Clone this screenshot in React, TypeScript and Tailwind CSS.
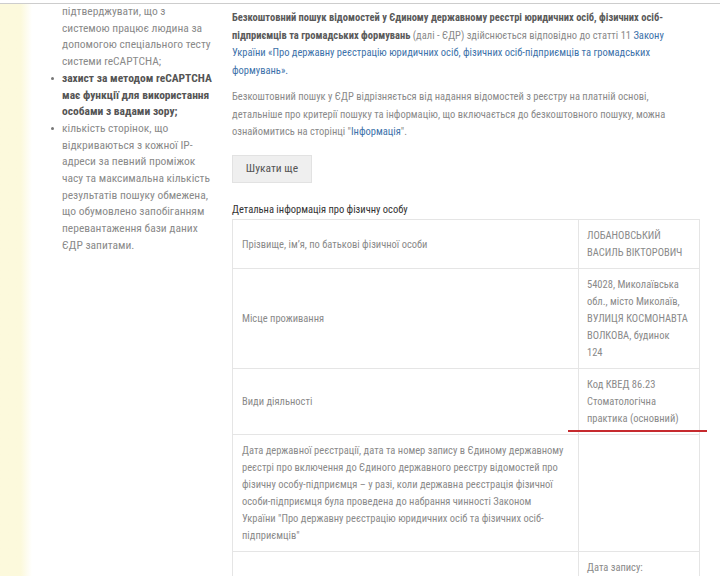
import type { ReactNode } from 'react';

const font = "font-['Liberation_Sans_Narrow','Roboto_Condensed','DejaVu_Sans_Condensed',sans-serif]";

function Lines({ lines }: { lines: ReactNode[] }) {
  return (
    <>
      {lines.map((l, i) => (
        <span key={i} className="block whitespace-nowrap">
          {l}
        </span>
      ))}
    </>
  );
}

function Bullet({ children, bold }: { children: ReactNode; bold?: boolean }) {
  return (
    <li className="relative">
      <span className="absolute left-[-11px] top-[7px] h-[3px] w-[3px] rounded-full bg-[#777]" />
      <div className={bold ? 'font-bold text-[#555]' : ''}>{children}</div>
    </li>
  );
}

const rows: { label: string[]; value: string[] }[] = [
  { label: ['Прізвище, ім’я, по батькові фізичної особи'], value: ['ЛОБАНОВСЬКИЙ', 'ВАСИЛЬ ВІКТОРОВИЧ'] },
  {
    label: ['Місце проживання'],
    value: ['54028, Миколаївська', 'обл., місто Миколаїв,', 'ВУЛИЦЯ КОСМОНАВТА', 'ВОЛКОВА, будинок', '124'],
  },
  { label: ['Види діяльності'], value: ['Код КВЕД 86.23', 'Стоматологічна', 'практика (основний)'] },
  {
    label: [
      'Дата державної реєстрації, дата та номер запису в Єдиному державному',
      'реєстрі про включення до Єдиного державного реєстру відомостей про',
      'фізичну особу-підприємця – у разі, коли державна реєстрація фізичної',
      'особи-підприємця була проведена до набрання чинності Законом',
      'України "Про державну реєстрацію юридичних осіб та фізичних осіб-',
      'підприємців"',
    ],
    value: [],
  },
  { label: [''], value: ['Дата запису:'] },
];

export default function App() {
  return (
    <div className={`h-[576px] w-[720px] overflow-hidden bg-white ${font} text-[#8a8a8a]`}>
      <div className="relative h-full">
        <div className="h-[3px]" />
        <div className="h-px bg-[#cdcdcd]" />

        <div className="flex h-full">
          {/* pale yellow page edge */}
          <div className="w-[32px] shrink-0 bg-linear-to-r from-[#fcf9dc] from-65% to-white" />

          {/* sidebar notes */}
          <div className="w-[200px] shrink-0 pl-[30px] text-[11.5px] leading-[16.7px]">
            <ul className="-mt-px">
              <li>
                <Lines lines={['підтверджувати, що з', 'системою працює людина за', 'допомогою спеціального тесту', 'системи reCAPTCHA;']} />
              </li>
              <Bullet bold>
                <Lines lines={['захист за методом reCAPTCHA', 'має функції для використання', 'особами з вадами зору;']} />
              </Bullet>
              <Bullet>
                <Lines
                  lines={[
                    'кількість сторінок, що',
                    'відкриваються з кожної IP-',
                    'адреси за певний проміжок',
                    'часу та максимальна кількість',
                    'результатів пошуку обмежена,',
                    'що обумовлено запобіганням',
                    'перевантаження бази даних',
                    'ЄДР запитами.',
                  ]}
                />
              </Bullet>
            </ul>
          </div>

          {/* main content */}
          <div className="w-[467px] shrink-0 pt-[5px] text-[10.5px] leading-[17.5px]">
            <p>
              <Lines
                lines={[
                  <b className="text-[#5a5a5a]">
                    Безкоштовний пошук відомостей у Єдиному державному реєстрі юридичних осіб, фізичних осіб-
                  </b>,
                  <>
                    <b className="text-[#5a5a5a]">підприємців та громадських формувань</b> (далі - ЄДР) здійснюється
                    відповідно до статті 11 <a className="text-[#3d72aa]">Закону</a>
                  </>,
                  <a className="text-[#3d72aa]">
                    України «Про державну реєстрацію юридичних осіб, фізичних осіб-підприємців та громадських
                  </a>,
                  <a className="text-[#3d72aa]">формувань».</a>,
                ]}
              />
            </p>
            <p className="mt-[9px]">
              <Lines
                lines={[
                  'Безкоштовний пошук у ЄДР відрізняється від надання відомостей з реєстру на платній основі,',
                  'детальніше про критерії пошуку та інформацію, що включається до безкоштовного пошуку, можна',
                  <>
                    ознайомитись на сторінці "<a className="text-[#3d72aa]">Інформація</a>".
                  </>,
                ]}
              />
            </p>

            <button className="mt-[14px] h-[28px] w-[80px] border border-[#e2e2e2] bg-[#efefef] text-[11.5px] text-[#555]">
              Шукати ще
            </button>

            <div className="mt-[18px] text-[#333]">Детальна інформація про фізичну особу</div>

            <table className="mt-px w-[467px] table-fixed border-collapse leading-[17px]">
              <colgroup>
                <col className="w-[346px]" />
                <col className="w-[121px]" />
              </colgroup>
              <tbody>
                {rows.map((r, i) => (
                  <tr key={i}>
                    <td className="border border-[#e5e5e5] px-[9px] py-[7px] align-middle">
                      <Lines lines={r.label} />
                    </td>
                    <td className="border border-[#e5e5e5] px-[8px] py-[7px] align-middle">
                      <Lines lines={r.value} />
                    </td>
                  </tr>
                ))}
              </tbody>
            </table>
          </div>
        </div>

        {/* red underline mark */}
        <div className="absolute left-[568px] top-[430px] h-[2px] w-[139px] bg-[#c62a2e]" />
      </div>
    </div>
  );
}
